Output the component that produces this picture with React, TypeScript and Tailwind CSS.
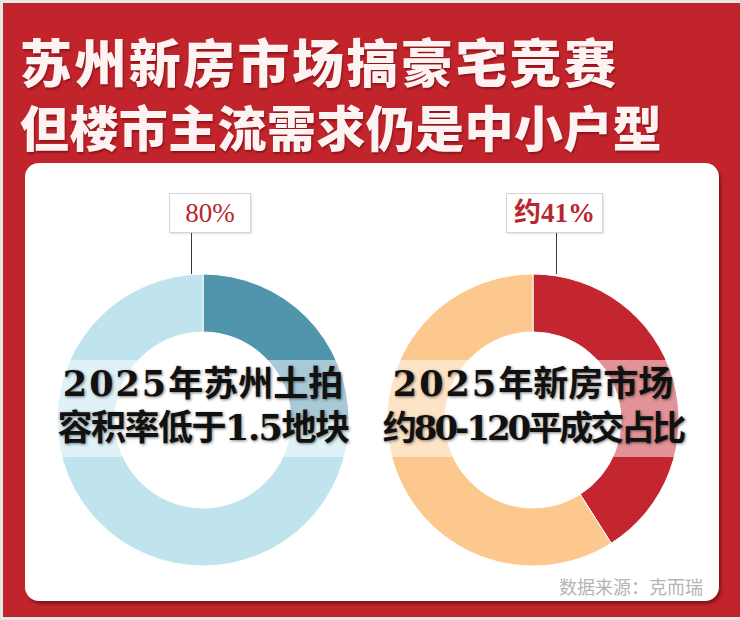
import React from "react";

const CJK = '"Noto Sans CJK SC", "Noto Sans", sans-serif';
const MIXED = '"DejaVu Serif", "Noto Sans CJK SC", serif';

type Seg = { from: number; to: number; color: string };

// donut segment path, angles as fractions of a turn, clockwise from 12 o'clock
function arcPath(c: number, R: number, r: number, a0: number, a1: number) {
  const t0 = a0 * Math.PI * 2;
  const t1 = a1 * Math.PI * 2;
  const pt = (rad: number, t: number) =>
    `${(c + rad * Math.sin(t)).toFixed(2)} ${(c - rad * Math.cos(t)).toFixed(2)}`;
  const large = a1 - a0 > 0.5 ? 1 : 0;
  return [
    `M ${pt(R, t0)}`,
    `A ${R} ${R} 0 ${large} 1 ${pt(R, t1)}`,
    `L ${pt(r, t1)}`,
    `A ${r} ${r} 0 ${large} 0 ${pt(r, t0)}`,
    "Z",
  ].join(" ");
}

function Donut({ segs }: { segs: Seg[] }) {
  return (
    <svg width="292" height="292" viewBox="0 0 292 292" className="block">
      {segs.map((s) => (
        <path
          key={s.color}
          d={arcPath(146, 146, 88, s.from, s.to)}
          fill={s.color}
          stroke="#ffffff"
          strokeWidth="1"
        />
      ))}
      <rect x="0" y="86" width="292" height="97" fill="#ffffff" opacity="0.5" />
    </svg>
  );
}

function Column({
  label,
  labelBold,
  boxLeft,
  boxWidth,
  lineLeft,
  segs,
  line1,
  line2,
}: {
  label: React.ReactNode;
  labelBold?: boolean;
  boxLeft: string;
  boxWidth: string;
  lineLeft: string;
  segs: Seg[];
  line1: React.ReactNode;
  line2: React.ReactNode;
}) {
  return (
    <div className="flex w-[330px] flex-col">
      <div
        className={`${boxLeft} ${boxWidth} flex h-[40px] items-center justify-center border border-[#d6d6d6] bg-white text-[27px] leading-none text-[#b8262e] shadow-[1px_1px_2px_rgba(0,0,0,0.12)] ${
          labelBold ? "font-bold" : "font-normal"
        }`}
        style={{ fontFamily: '"Liberation Serif", "Noto Sans CJK SC", serif' }}
      >
        {label}
      </div>
      <div className={`${lineLeft} h-[41px] w-px bg-[#3a3a3a]`} />
      <div className="relative ml-[19px] h-[292px] w-[292px]">
        <Donut segs={segs} />
        <div
          className="absolute left-[-30px] right-[-30px] top-[88px] text-center font-bold leading-[44px] text-[#111] [text-shadow:1px_1px_3px_rgba(0,0,0,0.5)]"
          style={{ fontFamily: MIXED }}
        >
          <div className="whitespace-nowrap text-[35px]">{line1}</div>
          {line2}
        </div>
      </div>
    </div>
  );
}

export default function App() {
  return (
    <div className="h-[620px] w-[740px] overflow-hidden bg-[#e6e6e6] pl-[3px] pt-[3px]">
      <div className="h-[614px] w-[737px] bg-[#c2242c]">
        <div
          className="h-[160px] pl-[17px] pt-[27px] font-black text-[#fdf3f3] [text-shadow:1px_2px_2px_rgba(80,0,0,0.45)]"
          style={{ fontFamily: CJK }}
        >
          <div className="whitespace-nowrap text-[52px] leading-[62px] tracking-[2.4px]">
            苏州新房市场搞豪宅竞赛
          </div>
          <div className="mt-[3px] whitespace-nowrap text-[49px] leading-[62px] tracking-[0.4px]">
            但楼市主流需求仍是中小户型
          </div>
        </div>
        <div className="ml-[22px] flex h-[438px] w-[694px] flex-col rounded-[14px] bg-white pt-[30px] shadow-[2px_3px_3px_rgba(60,0,0,0.45)]">
          <div className="flex pl-[13px]">
            <Column
              label="80%"
              boxLeft="ml-[131px]"
              boxWidth="w-[82px]"
              lineLeft="ml-[153px]"
              segs={[
                { from: 0, to: 0.25, color: "#5195ac" },
                { from: 0.25, to: 1, color: "#bfe4ee" },
              ]}
              line1={
                <>
                  <span className="tracking-[2px]">2025</span>年苏州土拍
                </>
              }
              line2={
                <div className="whitespace-nowrap text-[35px] tracking-[-1.5px]">
                  容积率低于1.5地块
                </div>
              }
            />
            <Column
              label="约41%"
              labelBold
              boxLeft="ml-[138px]"
              boxWidth="w-[97px]"
              lineLeft="ml-[188px]"
              segs={[
                { from: 0, to: 0.41, color: "#c4262f" },
                { from: 0.41, to: 1, color: "#fdc88e" },
              ]}
              line1={
                <>
                  <span className="tracking-[2px]">2025</span>年新房市场
                </>
              }
              line2={
                <div className="whitespace-nowrap text-[34px] tracking-[-3px]">
                  约80-120平成交占比
                </div>
              }
            />
          </div>
          <div className="mt-[8px] flex justify-end pr-[16px]">
            <span
              className="text-[18px] leading-[24px] text-[#b4b4b4]"
              style={{ fontFamily: CJK }}
            >
              数据来源：克而瑞
            </span>
          </div>
        </div>
      </div>
    </div>
  );
}
